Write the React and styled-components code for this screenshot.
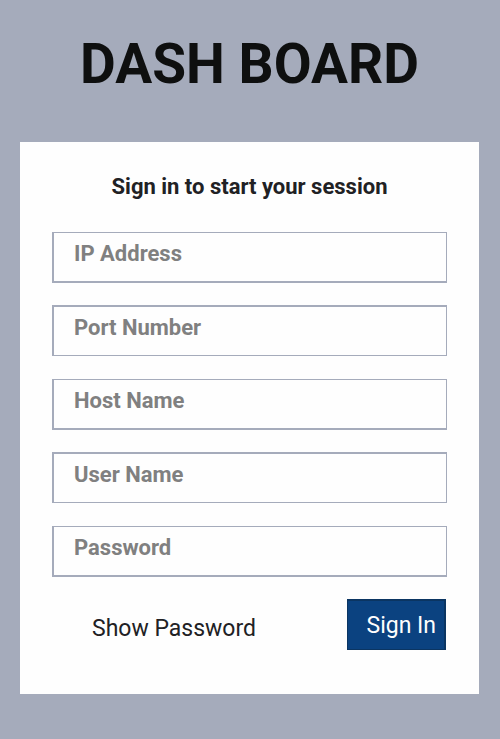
import React, { useState } from "react";
import styled, { createGlobalStyle } from "styled-components";

const GlobalStyle = createGlobalStyle`
  *, *::before, *::after { box-sizing: border-box; }
  body {
    margin: 0;
    min-height: 100vh;
    background: #a5abbb;
    font-family: Roboto, "Liberation Sans", sans-serif;
    color: #212124;
  }
`;

const Page = styled.main`
  padding: 32px 21px 44px 20px;
`;

const Title = styled.h1`
  margin: 0 0 46px;
  font-size: 55px;
  line-height: 64px;
  font-weight: 700;
  text-align: center;
  color: #0e0f0f;
`;

const Card = styled.form`
  background: #fefefe;
  padding: 32px 32px 44px;
`;

const Prompt = styled.p`
  margin: 0 0 32px;
  font-size: 22px;
  line-height: 26px;
  font-weight: 700;
  text-align: center;
`;

const Fields = styled.div`
  display: grid;
  gap: 22px;
`;

const Field = styled.input`
  display: block;
  width: 100%;
  height: 51px;
  padding: 0 20px 8px;
  border: solid #a5abbb;
  border-width: 1px 1px 2px 2px;
  border-radius: 0;
  outline: none;
  background: #fefefe;
  font: 700 22px Roboto, "Liberation Sans", sans-serif;
  color: #212124;
  &:nth-child(even) {
    margin-bottom: 1px;
    border-width: 2px 1px 1px 2px;
  }
  &::placeholder { color: #808080; opacity: 1; }
`;

const Actions = styled.div`
  display: flex;
  justify-content: space-between;
  align-items: center;
  margin-top: 22px;
  padding: 0 1px 0 40px;
`;

const Toggle = styled.label`
  padding-top: 8px;
  font-size: 23px;
  line-height: 26px;
  cursor: pointer;
`;

const HiddenCheck = styled.input`
  appearance: none;
  width: 0;
  height: 0;
  margin: 0;
`;

const SubmitButton = styled.button`
  height: 51px;
  padding: 0 8px 0 18px;
  border: solid #0b3562;
  border-width: 2px 2px 1px 1px;
  border-radius: 0;
  background: #0b4280;
  font: 400 23px Roboto, "Liberation Sans", sans-serif;
  color: #fefefe;
  cursor: pointer;
`;

const fields = [
  { name: "ip", label: "IP Address" },
  { name: "port", label: "Port Number" },
  { name: "host", label: "Host Name" },
  { name: "user", label: "User Name" },
];

export default function App() {
  const [visible, setVisible] = useState(false);
  return (
    <>
      <GlobalStyle />
      <Page>
        <Title>DASH BOARD</Title>
        <Card onSubmit={(e) => e.preventDefault()}>
          <Prompt>Sign in to start your session</Prompt>
          <Fields>
            {fields.map((f) => (
              <Field key={f.name} name={f.name} type="text" placeholder={f.label} aria-label={f.label} />
            ))}
            <Field name="password" type={visible ? "text" : "password"} placeholder="Password" aria-label="Password" />
          </Fields>
          <Actions>
            <Toggle>
              <HiddenCheck type="checkbox" checked={visible} onChange={(e) => setVisible(e.target.checked)} />
              Show Password
            </Toggle>
            <SubmitButton type="submit">Sign In</SubmitButton>
          </Actions>
        </Card>
      </Page>
    </>
  );
}
